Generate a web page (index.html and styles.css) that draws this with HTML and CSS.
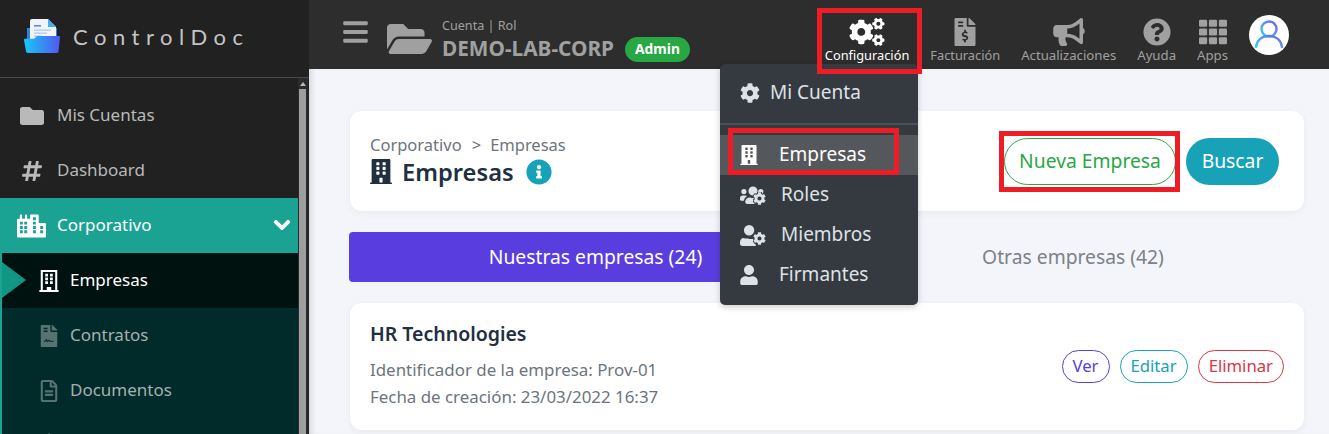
FILE: index.html
```html
<!DOCTYPE html>
<html lang="es">
<head>
    <meta charset="UTF-8">
    <title>ControlDoc - Empresas</title>
    <link rel="stylesheet" href="styles.css">
</head>
<body>

    <!-- iconos -->
    <svg class="sprite" xmlns="http://www.w3.org/2000/svg">
        <symbol id="i-folder" viewBox="0 0 512 512"><path d="M464 128H272l-64-64H48C21.49 64 0 85.49 0 112v288c0 26.51 21.49 48 48 48h416c26.51 0 48-21.49 48-48V176c0-26.51-21.49-48-48-48z"/></symbol>
        <symbol id="i-hashtag" viewBox="0 0 448 512"><path d="M440.667 182.109l7.143-40c1.313-7.355-4.342-14.109-11.813-14.109h-74.81l14.623-81.891C377.123 38.754 371.468 32 363.997 32h-40.632a12 12 0 0 0-11.813 9.891L296.175 128H197.54l14.623-81.891C213.477 38.754 207.822 32 200.35 32h-40.632a12 12 0 0 0-11.813 9.891L132.528 128H53.432a12 12 0 0 0-11.813 9.891l-7.143 40C33.163 185.246 38.818 192 46.289 192h74.81L98.242 320H19.146a12 12 0 0 0-11.813 9.891l-7.143 40C-1.123 377.246 4.532 384 12.003 384h74.81L72.19 465.891C70.877 473.246 76.532 480 84.003 480h40.632a12 12 0 0 0 11.813-9.891L151.826 384h98.634l-14.623 81.891C234.523 473.246 240.178 480 247.65 480h40.632a12 12 0 0 0 11.813-9.891L315.472 384h79.096a12 12 0 0 0 11.813-9.891l7.143-40c1.313-7.355-4.342-14.109-11.813-14.109h-74.81l22.857-128h79.096a12 12 0 0 0 11.813-9.891zM261.889 320h-98.634l22.857-128h98.634l-22.857 128z"/></symbol>
        <symbol id="i-city" viewBox="0 0 640 512"><path fill-rule="evenodd" d="M616 192H480V24c0-13.26-10.74-24-24-24H312c-13.26 0-24 10.74-24 24v72h-64V16c0-8.84-7.16-16-16-16h-16c-8.84 0-16 7.16-16 16v80h-64V16c0-8.84-7.160-16-16-16H80c-8.840 0-16 7.160-16 16v80H24c-13.26 0-24 10.74-24 24v360c0 17.67 14.33 32 32 32h576c17.67 0 32-14.33 32-32V216c0-13.26-10.75-24-24-24zM64 160h64v64H64zm0 96h64v64H64zm0 96h64v64H64zm96-192h64v64h-64zm0 96h64v64h-64zm0 96h64v64h-64zm192-288h64v64h-64zm0 96h64v64h-64zm0 96h64v64h-64zm0 96h64v64h-64zm160-96h64v64h-64zm0 96h64v64h-64z"/></symbol>
        <symbol id="i-chevron" viewBox="0 0 448 512"><path d="M207.029 381.476L12.686 187.132c-9.373-9.373-9.373-24.569 0-33.941l22.667-22.667c9.357-9.357 24.522-9.375 33.901-.04L224 284.505l154.745-154.021c9.379-9.335 24.544-9.317 33.901.04l22.667 22.667c9.373 9.373 9.373 24.569 0 33.941L240.971 381.476c-9.373 9.372-24.569 9.372-33.942 0z"/></symbol>
        <symbol id="i-building-o" viewBox="0 0 448 512"><path fill-rule="evenodd" d="M32 0h384v464h32v48H0v-48h32zM80 48v416h92v-70h104v70h92V48zM136 88h64v64h-64zm112 0h64v64h-64zM136 176h64v64h-64zm112 0h64v64h-64zM136 264h64v64h-64zm112 0h64v64h-64z"/></symbol>
        <symbol id="i-building" viewBox="0 0 448 512"><path d="M436 480h-20V24c0-13.255-10.745-24-24-24H56C42.745 0 32 10.745 32 24v456H12c-6.627 0-12 5.373-12 12v20h448v-20c0-6.627-5.373-12-12-12zM128 76c0-6.627 5.373-12 12-12h40c6.627 0 12 5.373 12 12v40c0 6.627-5.373 12-12 12h-40c-6.627 0-12-5.373-12-12V76zm0 96c0-6.627 5.373-12 12-12h40c6.627 0 12 5.373 12 12v40c0 6.627-5.373 12-12 12h-40c-6.627 0-12-5.373-12-12v-40zm52 148h-40c-6.627 0-12-5.373-12-12v-40c0-6.627 5.373-12 12-12h40c6.627 0 12 5.373 12 12v40c0 6.627-5.373 12-12 12zm76 160h-64v-84c0-6.627 5.373-12 12-12h40c6.627 0 12 5.373 12 12v84zm64-172c0 6.627-5.373 12-12 12h-40c-6.627 0-12-5.373-12-12v-40c0-6.627 5.373-12 12-12h40c6.627 0 12 5.373 12 12v40zm0-96c0 6.627-5.373 12-12 12h-40c-6.627 0-12-5.373-12-12v-40c0-6.627 5.373-12 12-12h40c6.627 0 12 5.373 12 12v40zm0-96c0 6.627-5.373 12-12 12h-40c-6.627 0-12-5.373-12-12V76c0-6.627 5.373-12 12-12h40c6.627 0 12 5.373 12 12v40z"/></symbol>
        <symbol id="i-contract" viewBox="0 0 384 512"><path fill-rule="evenodd" d="M224 136V0H24C10.700 0 0 10.700 0 24v464c0 13.300 10.700 24 24 24h336c13.300 0 24-10.700 24-24V160H248c-13.200 0-24-10.800-24-24zM64 72c0-4.400 3.600-8 8-8h80c4.400 0 8 3.600 8 8v16c0 4.400-3.600 8-8 8H72c-4.400 0-8-3.600-8-8zm0 64c0-4.400 3.600-8 8-8h80c4.400 0 8 3.600 8 8v16c0 4.400-3.600 8-8 8H72c-4.400 0-8-3.600-8-8zm40 256H72v-24h24l26-34c6-8 18-7 22 2l14 30 22-20c6-6 16-5 21 2l16 20h83v24h-95c-4 0-7-2-9-4l-11-13-26 23c-6 5-15 4-19-4l-12-27-18 22c-2 2-5 3-6 3zM384 122v6H256V0h6c6.400 0 12.500 2.500 17 7l98 98c4.500 4.500 7 10.600 7 17z"/></symbol>
        <symbol id="i-file" viewBox="0 0 384 512"><path fill-rule="evenodd" d="M288 248v28c0 6.600-5.400 12-12 12H108c-6.600 0-12-5.400-12-12v-28c0-6.600 5.400-12 12-12h168c6.600 0 12 5.400 12 12zm-12 72H108c-6.600 0-12 5.400-12 12v28c0 6.600 5.400 12 12 12h168c6.600 0 12-5.400 12-12v-28c0-6.600-5.400-12-12-12zm108-188.100V464c0 26.500-21.500 48-48 48H48c-26.500 0-48-21.500-48-48V48C0 21.500 21.500 0 48 0h204.100C264.800 0 277 5.100 286 14.100L369.900 98c9 8.900 14.100 21.200 14.100 33.900zm-128-80V128h76.100L256 51.900zM336 464V176H232c-13.300 0-24-10.700-24-24V48H48v416h288z"/></symbol>
        <symbol id="i-peak" viewBox="0 0 384 512"><path d="M192 0l72 90h-44v120h90v60H74v-60h90V90h-44z"/></symbol>
        <symbol id="i-bars" viewBox="0 0 448 512"><path d="M16 132h416c8.837 0 16-7.163 16-16V76c0-8.837-7.163-16-16-16H16C7.163 60 0 67.163 0 76v40c0 8.837 7.163 16 16 16zm0 160h416c8.837 0 16-7.163 16-16v-40c0-8.837-7.163-16-16-16H16c-8.837 0-16 7.163-16 16v40c0 8.837 7.163 16 16 16zm0 160h416c8.837 0 16-7.163 16-16v-40c0-8.837-7.163-16-16-16H16c-8.837 0-16 7.163-16 16v40c0 8.837 7.163 16 16 16z"/></symbol>
        <symbol id="i-folder-open" viewBox="0 0 576 512"><path d="M572.694 292.093L500.27 416.248A63.997 63.997 0 0 1 444.989 448H45.025c-18.523 0-30.064-20.093-20.731-36.093l72.424-124.155A64 64 0 0 1 152 256h399.964c18.523 0 30.064 20.093 20.73 36.093zM152 224h328v-48c0-26.51-21.49-48-48-48H272l-64-64H48C21.49 64 0 85.49 0 112v278.046l69.077-118.418C86.214 242.25 117.989 224 152 224z"/></symbol>
        <symbol id="i-cogs" viewBox="0 0 640 512"><path d="M512.100 191l-8.200 14.300c-3 5.300-9.400 7.500-15.100 5.400-11.800-4.400-22.600-10.700-32.100-18.600-4.600-3.800-5.800-10.500-2.800-15.700l8.200-14.300c-6.900-8-12.300-17.300-15.900-27.400h-16.500c-6 0-11.200-4.300-12.200-10.300-2-12-2.100-24.600 0-37.100 1-6 6.200-10.400 12.200-10.400h16.500c3.600-10.100 9-19.400 15.900-27.400l-8.200-14.300c-3-5.200-1.900-11.900 2.800-15.700 9.500-7.900 20.400-14.200 32.100-18.600 5.700-2.100 12.100.1 15.100 5.400l8.200 14.300c10.500-1.900 21.200-1.900 31.700 0L552 6.300c3-5.300 9.400-7.500 15.100-5.400 11.800 4.400 22.600 10.700 32.100 18.600 4.600 3.800 5.800 10.500 2.800 15.700l-8.200 14.300c6.900 8 12.300 17.300 15.900 27.400h16.500c6 0 11.200 4.300 12.200 10.300 2 12 2.100 24.600 0 37.100-1 6-6.200 10.400-12.200 10.400h-16.500c-3.600 10.100-9 19.400-15.900 27.400l8.200 14.300c3 5.200 1.900 11.900-2.800 15.700-9.500 7.900-20.400 14.200-32.100 18.600-5.700 2.100-12.100-.1-15.100-5.400l-8.200-14.300c-10.400 1.900-21.200 1.900-31.700 0zm-10.500-58.800c38.500 29.600 82.400-14.300 52.800-52.800-38.500-29.700-82.400 14.300-52.800 52.800zM386.300 286.100l33.700 16.800c10.100 5.800 14.500 18.100 10.500 29.100-8.900 24.200-26.400 46.400-42.600 65.800-7.400 8.900-20.200 11.100-30.300 5.300l-29.100-16.800c-16 13.700-34.600 24.600-54.900 31.700v33.600c0 11.600-8.300 21.600-19.700 23.600-24.600 4.200-50.400 4.400-75.900 0-11.500-2-20-11.900-20-23.600V418c-20.300-7.200-38.900-18-54.900-31.700L74 403c-10 5.800-22.900 3.600-30.300-5.300-16.200-19.400-33.300-41.600-42.200-65.700-4-10.900.4-23.200 10.500-29.100l33.300-16.800c-3.900-20.900-3.900-42.400 0-63.400L12 205.800c-10.100-5.800-14.600-18.100-10.500-29 8.900-24.200 26-46.400 42.200-65.800 7.400-8.900 20.200-11.100 30.300-5.300l29.100 16.800c16-13.700 34.600-24.600 54.900-31.700V57.100c0-11.500 8.200-21.500 19.600-23.500 24.600-4.200 50.500-4.400 76-.1 11.500 2 20 11.900 20 23.600v33.600c20.300 7.200 38.900 18 54.900 31.700l29.100-16.800c10-5.800 22.900-3.600 30.300 5.300 16.200 19.400 33.200 41.600 42.100 65.800 4 10.900.1 23.200-10 29.100l-33.700 16.800c3.900 21 3.900 42.500 0 63.500zm-117.600 21.100c59.200-77-28.700-164.900-105.700-105.700-59.200 77 28.700 164.900 105.700 105.700zm243.400 182.700l-8.200 14.300c-3 5.300-9.400 7.500-15.100 5.400-11.800-4.400-22.600-10.700-32.100-18.600-4.600-3.800-5.800-10.500-2.800-15.700l8.200-14.300c-6.900-8-12.300-17.300-15.900-27.400h-16.500c-6 0-11.200-4.300-12.200-10.300-2-12-2.100-24.600 0-37.100 1-6 6.200-10.400 12.200-10.400h16.500c3.600-10.100 9-19.400 15.900-27.400l-8.200-14.300c-3-5.200-1.900-11.900 2.800-15.700 9.500-7.900 20.400-14.200 32.100-18.600 5.700-2.100 12.100.1 15.100 5.400l8.200 14.300c10.500-1.900 21.200-1.900 31.700 0l8.200-14.300c3-5.300 9.400-7.500 15.100-5.400 11.800 4.400 22.600 10.700 32.100 18.600 4.600 3.800 5.800 10.500 2.800 15.700l-8.200 14.300c6.900 8 12.300 17.300 15.900 27.400h16.500c6 0 11.200 4.300 12.200 10.300 2 12 2.100 24.600 0 37.100-1 6-6.200 10.400-12.200 10.400h-16.500c-3.600 10.100-9 19.400-15.900 27.400l8.200 14.300c3 5.200 1.900 11.900-2.800 15.700-9.500 7.900-20.400 14.200-32.100 18.600-5.700 2.100-12.100-.1-15.100-5.400l-8.200-14.300c-10.400 1.900-21.200 1.900-31.700 0zM501.600 431c38.500 29.600 82.400-14.300 52.800-52.800-38.500-29.600-82.400 14.300-52.800 52.800z"/></symbol>
        <symbol id="i-invoice" viewBox="0 0 384 512"><path fill-rule="evenodd" d="M377 105L279.100 7c-4.500-4.500-10.600-7-17-7H256v128h128v-6.100c0-6.300-2.500-12.400-7-16.900zM224 136V0H24C10.700 0 0 10.700 0 24v464c0 13.300 10.700 24 24 24h336c13.300 0 24-10.700 24-24V160H248c-13.200 0-24-10.800-24-24zM64 72c0-4.400 3.600-8 8-8h80c4.400 0 8 3.600 8 8v16c0 4.400-3.600 8-8 8H72c-4.400 0-8-3.600-8-8V72zm0 80v-16c0-4.400 3.600-8 8-8h80c4.400 0 8 3.600 8 8v16c0 4.400-3.600 8-8 8H72c-4.400 0-8-3.600-8-8zm144 263.900V440c0 4.400-3.600 8-8 8h-16c-4.400 0-8-3.600-8-8v-24.300c-11.300-.6-22.300-4.500-31.400-11.400-3.900-2.900-4.100-8.800-.6-12.100l11.800-11.200c2.800-2.600 6.900-2.800 10.100-.7 3.900 2.400 8.300 3.700 12.800 3.700h28.100c6.500 0 11.800-5.900 11.800-13.200 0-6-3.600-11.200-8.800-12.700l-45-13.500c-18.600-5.600-31.600-23.400-31.600-43.400 0-24.500 19.100-44.400 42.700-45.100V224c0-4.400 3.600-8 8-8h16c4.400 0 8 3.600 8 8v24.300c11.300.6 22.300 4.500 31.400 11.400 3.900 2.900 4.100 8.800.6 12.100l-11.800 11.200c-2.800 2.600-6.900 2.800-10.100.7-3.900-2.400-8.300-3.700-12.800-3.700h-28.100c-6.500 0-11.800 5.900-11.800 13.200 0 6 3.600 11.200 8.800 12.700l45 13.500c18.600 5.600 31.600 23.400 31.600 43.400 0 24.500-19 44.400-42.700 45.100z"/></symbol>
        <symbol id="i-bullhorn" viewBox="0 0 576 512"><path d="M576 240c0-23.630-12.950-44.040-32-55.120V32.010C544 23.260 537.020 0 512 0c-7.120 0-14.190 2.380-19.980 7.020l-85.030 68.030C364.280 109.190 310.660 128 256 128H64c-35.350 0-64 28.650-64 64v96c0 35.350 28.650 64 64 64h33.700c-1.390 10.480-2.180 21.140-2.180 32 0 39.770 9.260 77.350 25.560 110.940 5.190 10.690 16.520 17.060 28.400 17.060h74.280c26.050 0 41.690-29.840 25.900-50.560-16.400-21.520-26.150-48.360-26.150-77.440 0-11.110 1.620-21.790 4.410-32H256c54.660 0 108.280 18.810 150.980 52.950l85.030 68.030a32.023 32.023 0 0 0 19.980 7.020c24.920 0 32-22.780 32-32V295.130C563.050 284.040 576 263.630 576 240zm-96 141.420l-33.050-26.440C392.950 311.780 325.120 288 256 288v-96c69.120 0 136.950-23.780 190.950-66.980L480 98.580v282.840z"/></symbol>
        <symbol id="i-question" viewBox="0 0 512 512"><path d="M504 256c0 136.997-111.043 248-248 248S8 392.997 8 256C8 119.083 119.043 8 256 8s248 111.083 248 248zM262.655 90c-54.497 0-89.255 22.957-116.549 63.758-3.536 5.286-2.353 12.415 2.715 16.258l34.699 26.310c5.205 3.947 12.621 3.008 16.665-2.122 17.864-22.658 30.113-35.797 57.303-35.797 20.429 0 45.698 13.148 45.698 32.958 0 14.976-12.363 22.667-32.534 33.976C247.128 238.528 216 254.941 216 296v4c0 6.627 5.373 12 12 12h56c6.627 0 12-5.373 12-12v-1.333c0-28.462 83.186-29.647 83.186-106.667 0-58.002-60.165-102-116.531-102zM256 338c-25.365 0-46 20.635-46 46 0 25.364 20.635 46 46 46s46-20.636 46-46c0-25.365-20.635-46-46-46z"/></symbol>
        <symbol id="i-th" viewBox="0 0 512 512"><rect y="32" width="149" height="128" rx="22"/><rect x="181" y="32" width="150" height="128" rx="22"/><rect x="363" y="32" width="149" height="128" rx="22"/><rect y="192" width="149" height="128" rx="22"/><rect x="181" y="192" width="150" height="128" rx="22"/><rect x="363" y="192" width="149" height="128" rx="22"/><rect y="352" width="149" height="128" rx="22"/><rect x="181" y="352" width="150" height="128" rx="22"/><rect x="363" y="352" width="149" height="128" rx="22"/></symbol>
        <symbol id="i-cog" viewBox="0 0 512 512"><path d="M487.400 315.700l-42.600-24.600c4.300-23.200 4.300-47 0-70.200l42.600-24.600c4.900-2.800 7.100-8.600 5.500-14-11.100-35.600-30-67.800-54.700-94.600-3.800-4.100-10-5.100-14.800-2.300L380.800 110c-17.900-15.400-38.500-27.300-60.800-35.100V25.800c0-5.600-3.900-10.500-9.400-11.700-36.700-8.200-74.300-7.800-109.200 0-5.500 1.200-9.400 6.100-9.400 11.700V75c-22.200 7.900-42.800 19.800-60.800 35.100L88.700 85.500c-4.900-2.800-11-1.900-14.800 2.300-24.700 26.700-43.600 58.900-54.700 94.600-1.700 5.400.6 11.200 5.500 14L67.300 221c-4.300 23.200-4.300 47 0 70.200l-42.600 24.600c-4.900 2.800-7.100 8.600-5.500 14 11.100 35.600 30 67.800 54.700 94.600 3.800 4.100 10 5.100 14.800 2.300l42.600-24.600c17.900 15.400 38.500 27.300 60.800 35.100v49.200c0 5.600 3.900 10.500 9.400 11.700 36.700 8.200 74.300 7.800 109.200 0 5.500-1.200 9.400-6.100 9.400-11.700v-49.200c22.200-7.900 42.800-19.800 60.800-35.100l42.600 24.600c4.900 2.800 11 1.900 14.800-2.300 24.700-26.700 43.600-58.900 54.700-94.600 1.500-5.500-.7-11.300-5.600-14.100zM256 336c-44.100 0-80-35.900-80-80s35.900-80 80-80 80 35.900 80 80-35.900 80-80 80z"/></symbol>
        <symbol id="i-user" viewBox="0 0 448 512"><path d="M224 256c70.700 0 128-57.300 128-128S294.700 0 224 0 96 57.300 96 128s57.300 128 128 128zm89.600 32h-16.700c-22.200 10.200-46.900 16-72.900 16s-50.600-5.800-72.900-16h-16.700C60.200 288 0 348.200 0 422.400V464c0 26.500 21.500 48 48 48h352c26.500 0 48-21.500 48-48v-41.600c0-74.200-60.200-134.400-134.400-134.400z"/></symbol>
        <symbol id="i-users-cog" viewBox="0 0 640 512"><path d="M96 224a64 64 0 1 0 0-128 64 64 0 0 0 0 128zm224 32a112 112 0 1 0 0-224 112 112 0 0 0 0 224zM0 368v-48c0-35 29-64 64-64h64c18 0 34 7 45 19-40 22-69 62-75 109H32c-18 0-32-7-32-16zm128 48c0-62 50-112 112-112h16c28 13 62 16 96 8-8 40 2 72 30 96-8 17-10 34-8 56H176c-26 0-48-22-48-48zm384-192a64 64 0 1 0 0-128 64 64 0 0 0 0 128z"/></symbol>
        <symbol id="i-user-cog" viewBox="0 0 640 512"><path d="M224 256a128 128 0 1 0 0-256 128 128 0 0 0 0 256zM64 512h328c-8-20-12-40-12-60-12-10-30-26-26-62 2-24 16-46 36-60-8-2-16-2-24-2h-17c-22 10-47 16-73 16s-51-6-73-16H134C60 288 0 348 0 422v42c0 26 22 48 64 48z"/></symbol>
        <symbol id="i-info" viewBox="0 0 512 512"><path d="M256 8C119.043 8 8 119.083 8 256c0 136.997 111.043 248 248 248s248-111.003 248-248C504 119.083 392.957 8 256 8zm0 110c23.196 0 42 18.804 42 42s-18.804 42-42 42-42-18.804-42-42 18.804-42 42-42zm56 254c0 6.627-5.373 12-12 12h-88c-6.627 0-12-5.373-12-12v-24c0-6.627 5.373-12 12-12h12v-64h-12c-6.627 0-12-5.373-12-12v-24c0-6.627 5.373-12 12-12h64c6.627 0 12 5.373 12 12v100h12c6.627 0 12 5.373 12 12v24z"/></symbol>
        <linearGradient id="g-folder" x1="0" y1="0" x2="1" y2="0"><stop offset="0" stop-color="#16c8fc"/><stop offset="1" stop-color="#5457ee"/></linearGradient>
        <linearGradient id="g-avatar" x1="0" y1="1" x2="1" y2="0"><stop offset="0" stop-color="#2fd3f5"/><stop offset="1" stop-color="#7a5cf0"/></linearGradient>
    </svg>

    <!-- menu lateral -->
    <aside class="sidebar">
        <div class="brand">
            <svg class="brand-logo" viewBox="0 0 36 34">
                <path d="M3 9h30v12H3z" fill="#2b86d8"/>
                <path d="M6 2a2 2 0 0 1 2-2h16l8 8v18H6z" fill="#f1f4f9"/>
                <path d="M24 0l8 8h-8z" fill="#3fb0f6"/>
                <path d="M10 6h7v1.600h-7z" fill="#4f8df2"/>
                <path d="M10 10.500h17v1.300H10zM10 13.500h13v1.300H10zM10 16.500h8v1.300h-8z" fill="#a9c8f4"/>
                <path d="M0 21c0-.8.5-1.300 1.200-1.300h9l2.300-2.200c.3-.3.7-.5 1.100-.5h21.200c.7 0 1.200.5 1.200 1.200l-1.500 14.300c-.1 1-1 1.500-2 1.500H4c-1 0-1.800-.7-2-1.700z" fill="url(#g-folder)"/>
            </svg>
            <span class="brand-name">ControlDoc</span>
        </div>
        <div class="side-body">
            <nav class="side-nav">
                <a class="nav-item"><svg class="nav-icon icon-folder"><use href="#i-folder"/></svg><span>Mis Cuentas</span></a>
                <a class="nav-item"><svg class="nav-icon icon-hash"><use href="#i-hashtag"/></svg><span>Dashboard</span></a>
                <a class="nav-item open"><svg class="nav-icon icon-city"><use href="#i-city"/></svg><span>Corporativo</span><svg class="nav-chevron"><use href="#i-chevron"/></svg></a>
                <div class="subnav">
                    <a class="sub-item active"><svg class="sub-icon"><use href="#i-building-o"/></svg><span>Empresas</span></a>
                    <a class="sub-item"><svg class="sub-icon"><use href="#i-contract"/></svg><span>Contratos</span></a>
                    <a class="sub-item"><svg class="sub-icon"><use href="#i-file"/></svg><span>Documentos</span></a>
                    <a class="sub-item next"><svg class="sub-icon"><use href="#i-peak"/></svg></a>
                </div>
            </nav>
            <div class="scrollbar">
                <span class="scroll-arrow"></span>
                <span class="scroll-thumb"></span>
            </div>
        </div>
    </aside>

    <div class="content">
        <!-- barra superior -->
        <header class="topbar">
            <svg class="menu-toggle"><use href="#i-bars"/></svg>
            <svg class="account-icon"><use href="#i-folder-open"/></svg>
            <div class="account">
                <div class="account-label">Cuenta | Rol</div>
                <div class="account-name"><span>DEMO-LAB-CORP</span><span class="badge-admin">Admin</span></div>
            </div>
            <div class="top-links">
                <a class="top-link config"><svg class="top-icon w-cogs"><use href="#i-cogs"/></svg><span>Configuración</span></a>
                <a class="top-link fact"><svg class="top-icon"><use href="#i-invoice"/></svg><span>Facturación</span></a>
                <a class="top-link"><svg class="top-icon w-horn"><use href="#i-bullhorn"/></svg><span>Actualizaciones</span></a>
                <a class="top-link"><svg class="top-icon"><use href="#i-question"/></svg><span>Ayuda</span></a>
                <a class="top-link"><svg class="top-icon"><use href="#i-th"/></svg><span>Apps</span></a>
                <div class="avatar">
                    <svg viewBox="0 0 40 40"><g fill="none" stroke="url(#g-avatar)" stroke-width="2.400" stroke-linecap="round"><circle cx="20" cy="14" r="7.500"/><path d="M7 32c1-7 6-11 13-11s12 4 13 11"/></g></svg>
                </div>
            </div>
        </header>

        <main class="page">
            <section class="card head-card">
                <div>
                    <div class="crumbs"><span>Corporativo</span><span class="crumb-sep">&gt;</span><span>Empresas</span></div>
                    <h1 class="page-title"><svg class="title-icon"><use href="#i-building"/></svg>Empresas<svg class="info-icon"><use href="#i-info"/></svg></h1>
                </div>
                <div class="head-actions">
                    <button class="btn btn-new">Nueva Empresa</button>
                    <button class="btn btn-search">Buscar</button>
                </div>
            </section>

            <div class="tabs">
                <div class="tab tab-on">Nuestras empresas (24)</div>
                <div class="tab tab-off">Otras empresas (42)</div>
            </div>

            <section class="card company">
                <div>
                    <h2 class="company-name">HR Technologies</h2>
                    <p class="company-line">Identificador de la empresa: Prov-01</p>
                    <p class="company-line">Fecha de creación: 23/03/2022 16:37</p>
                </div>
                <div class="company-actions">
                    <button class="pill pill-ver">Ver</button>
                    <button class="pill pill-edit">Editar</button>
                    <button class="pill pill-del">Eliminar</button>
                </div>
            </section>
        </main>

        <!-- menu desplegable de configuracion -->
        <div class="dropdown">
            <a class="drop-item"><svg class="drop-icon cog"><use href="#i-cog"/></svg><span>Mi Cuenta</span></a>
            <hr class="drop-line">
            <a class="drop-item selected"><svg class="drop-icon"><use href="#i-building"/></svg><span>Empresas</span></a>
            <a class="drop-item"><svg class="drop-icon wide"><use href="#i-users-cog"/></svg><svg class="mini-cog"><use href="#i-cog"/></svg><span>Roles</span></a>
            <a class="drop-item"><svg class="drop-icon wide"><use href="#i-user-cog"/></svg><svg class="mini-cog"><use href="#i-cog"/></svg><span>Miembros</span></a>
            <a class="drop-item"><svg class="drop-icon"><use href="#i-user"/></svg><span>Firmantes</span></a>
        </div>
    </div>

</body>
</html>
```

FILE: styles.css
```css
/* base */
html, body {
    margin: 0;
    padding: 0;
    height: 100vh;
    overflow: hidden;
}

body {
    display: flex;
    font-family: "Noto Sans", sans-serif;
    background-color: #f4f5fa;
    color: #212f3f;
}

.sprite {
    position: absolute;
    width: 0;
    height: 0;
}

svg {
    fill: currentColor;
}

/* menu lateral */
.sidebar {
    width: 309px;
    flex-shrink: 0;
    background-color: #212121;
    color: #b9b9b9;
    display: flex;
    flex-direction: column;
}

.brand {
    height: 72px;
    padding: 0 0 5px 24px;
    border-bottom: 1px solid #4a4a4a;
    display: flex;
    align-items: center;
}

.brand-logo {
    width: 36px;
    height: 34px;
}

.brand-name {
    margin-left: 13px;
    font-family: "Lato", sans-serif;
    font-size: 22px;
    letter-spacing: 6.5px;
    color: #c4c4c4;
}

.side-body {
    flex: 1;
    display: flex;
    min-height: 0;
}

.side-nav {
    width: 298px;
    padding-top: 10px;
    overflow: hidden;
}

.nav-item {
    height: 55px;
    display: flex;
    align-items: center;
    font-size: 17px;
    position: relative;
}

.nav-item span, .sub-item span, .drop-item span {
    padding-bottom: 2px;
}

.nav-icon {
    width: 24px;
    height: 24px;
    margin-left: 20px;
    margin-right: 13px;
}

.icon-hash {
    width: 20px;
    margin-left: 22px;
    margin-right: 15px;
}

.icon-city {
    width: 29px;
    margin-left: 17px;
    margin-right: 11px;
}

.nav-item.open {
    background-color: #1aa392;
    color: #ffffff;
}

.nav-chevron {
    width: 18px;
    height: 18px;
    position: absolute;
    right: 7px;
    top: 18px;
    stroke: currentColor;
    stroke-width: 30px;
}

.subnav {
    background-color: #012b2a;
    border-left: 2px solid #1aa392;
}

.sub-item {
    height: 55px;
    display: flex;
    align-items: center;
    color: #a3b1b0;
    font-size: 17px;
    position: relative;
}

.sub-icon {
    width: 20px;
    height: 22px;
    margin-left: 37px;
    margin-right: 11px;
    color: #577371;
}

.sub-item.active {
    background-color: #00120f;
    color: #ffffff;
}

.sub-item.active .sub-icon {
    color: #ffffff;
}

.sub-item.next .sub-icon {
    margin-bottom: 4px;
    color: #7d9392;
}

.sub-item.active::before {
    content: "";
    position: absolute;
    left: 0;
    top: 9px;
    border-left: 24px solid #129684;
    border-top: 18px solid transparent;
    border-bottom: 18px solid transparent;
}

.scrollbar {
    width: 10px;
    background-color: #2b2b2b;
    display: flex;
    flex-direction: column;
    align-items: center;
    padding: 4px 1px 0 0;
    box-sizing: border-box;
    height: calc(100vh - 78px);
}

.scroll-arrow {
    border-left: 3px solid transparent;
    border-right: 3px solid transparent;
    border-bottom: 4px solid #b9b9b9;
}

.scroll-thumb {
    margin-top: 3px;
    width: 7px;
    flex: 1;
    background-color: #9e9e9e;
}

/* barra superior */
.content {
    flex: 1;
    min-width: 0;
    position: relative;
    display: flex;
    flex-direction: column;
}

.topbar {
    height: 69px;
    flex-shrink: 0;
    background-color: #2d2d2d;
    color: #a0a0a0;
    display: flex;
    align-items: center;
}

.menu-toggle {
    width: 25px;
    height: 28px;
    margin-left: 34px;
    margin-bottom: 5px;
}

.account-icon {
    width: 47px;
    height: 40px;
    margin-left: 18px;
    margin-top: 9px;
}

.account {
    margin-left: 9px;
    margin-top: 10px;
}

.account-label {
    font-size: 12.6px;
    line-height: 15px;
    margin-bottom: 2px;
}

.account-name {
    display: flex;
    align-items: flex-start;
    gap: 11px;
    font-size: 20.8px;
    font-weight: 700;
    line-height: 26px;
}

.badge-admin {
    margin-top: 2px;
    padding: 0 10px;
    height: 25px;
    line-height: 24px;
    border-radius: 13px;
    background-color: #28a745;
    color: #ffffff;
    font-size: 13.8px;
}

.top-links {
    align-self: flex-start;
    margin-left: auto;
    margin-right: 40px;
    padding-top: 18px;
    display: flex;
    align-items: flex-start;
    gap: 21px;
}

.top-link {
    display: flex;
    flex-direction: column;
    align-items: center;
    font-size: 13.2px;
    line-height: 16px;
}

.top-link.fact {
    font-size: 12.8px;
}

.top-icon {
    width: 28px;
    height: 28px;
    margin-bottom: 1px;
}

.w-cogs {
    width: 36px;
}

.w-horn {
    width: 32px;
}

.top-link.config {
    color: #ffffff;
    position: relative;
    font-size: 12.8px;
}

/* recuadros rojos sobre la captura */
.top-link.config::after {
    content: "";
    position: absolute;
    left: -8px;
    right: -13px;
    top: -10px;
    bottom: -11px;
    border: 5px solid #ee1c25;
    z-index: 2;
}

.avatar {
    width: 40px;
    height: 40px;
    border-radius: 50%;
    background-color: #ffffff;
    margin-top: -3px;
}

.avatar svg {
    display: block;
    width: 40px;
    height: 40px;
}

/* contenido */
.page {
    flex: 1;
    padding: 42px 25px 0 41px;
    box-shadow: inset 6px 0 6px -4px rgba(0, 0, 0, 0.14);
}

.card {
    background-color: #ffffff;
    border-radius: 12px;
    box-shadow: 0 2px 6px rgba(60, 70, 110, 0.06);
    display: flex;
    justify-content: space-between;
    align-items: center;
}

.head-card {
    height: 100px;
    padding: 0 25px 0 20px;
}

.crumbs {
    font-size: 16.5px;
    line-height: 21px;
    color: #6c757d;
}

.crumb-sep {
    margin: 0 9px 0 10px;
}

.page-title {
    margin: 0;
    display: flex;
    align-items: center;
    font-size: 23.7px;
    line-height: 34px;
    font-weight: 600;
    color: #212f3f;
}

.title-icon {
    width: 22px;
    height: 25px;
    margin-right: 10px;
}

.info-icon {
    width: 26px;
    height: 26px;
    margin-left: 12px;
    color: #17a2b8;
}

.head-actions {
    display: flex;
    gap: 10px;
}

.btn {
    height: 47px;
    padding: 0 0 2px;
    border-radius: 24px;
    font-family: inherit;
    font-size: 19.3px;
    border: 1px solid transparent;
}

.btn-new {
    width: 172px;
    background-color: #ffffff;
    border-color: #28a745;
    color: #28a745;
    position: relative;
}

.btn-new::after {
    content: "";
    position: absolute;
    left: -6px;
    right: -5px;
    top: -8px;
    bottom: -8px;
    border: 5px solid #ee1c25;
}

.btn-search {
    width: 93px;
    background-color: #17a2b8;
    color: #ffffff;
}

.tabs {
    display: flex;
    margin-top: 21px;
    margin-left: -1px;
    height: 50px;
}

.tab {
    display: flex;
    align-items: center;
    justify-content: center;
    padding-bottom: 2px;
    box-sizing: border-box;
    font-size: 19.3px;
    border-radius: 4px;
}

.tab-on {
    width: 493px;
    background-color: #5a3ddf;
    color: #ffffff;
}

.tab-off {
    flex: 1;
    color: #7b8187;
}

.company {
    margin-top: 21px;
    height: 127px;
    padding: 0 20px;
    align-items: flex-start;
}

.company-name {
    margin: 19px 0 10px;
    font-size: 19.5px;
    line-height: 24px;
    font-weight: 600;
}

.company-line {
    margin: 0;
    font-size: 16.9px;
    line-height: 27px;
    color: #6c757d;
}

.company-actions {
    display: flex;
    gap: 10px;
    margin-top: 47px;
}

.pill {
    height: 33px;
    padding: 0 10px 2px;
    border-radius: 17px;
    background-color: #ffffff;
    font-family: inherit;
    font-size: 16.7px;
    border: 1px solid;
}

.pill-ver {
    color: #5a3ddf;
}

.pill-edit {
    color: #17a2b8;
}

.pill-del {
    color: #dc3545;
}

/* menu desplegable */
.dropdown {
    position: absolute;
    left: 411px;
    top: 64px;
    width: 198px;
    height: 241px;
    border-radius: 5px;
    background-color: #343a40;
    box-shadow: 0 2px 6px rgba(0, 0, 0, 0.2);
    color: #dee2e6;
    padding-top: 9px;
    box-sizing: border-box;
}

.drop-item {
    height: 40px;
    display: flex;
    align-items: center;
    font-size: 19px;
    position: relative;
    padding-left: 20px;
}

.drop-icon {
    width: 18px;
    height: 20px;
    margin-right: 21px;
}

.drop-icon.cog {
    width: 20px;
    margin-right: 10px;
}

.drop-icon.wide {
    width: 26px;
    height: 21px;
    margin-right: 15px;
}

.mini-cog {
    position: absolute;
    left: 33px;
    top: 17px;
    width: 13px;
    height: 13px;
    stroke: #343a40;
    stroke-width: 70px;
    paint-order: stroke;
}

.drop-line {
    margin: 10px 0 10px;
    border: 0;
    border-top: 2px solid #4b5157;
}

.drop-item.selected {
    background-color: #54585c;
    color: #ffffff;
}

.drop-item.selected::after {
    content: "";
    position: absolute;
    left: 8px;
    right: 19px;
    top: -7px;
    bottom: 0;
    border: 5px solid #ee1c25;
}
```
